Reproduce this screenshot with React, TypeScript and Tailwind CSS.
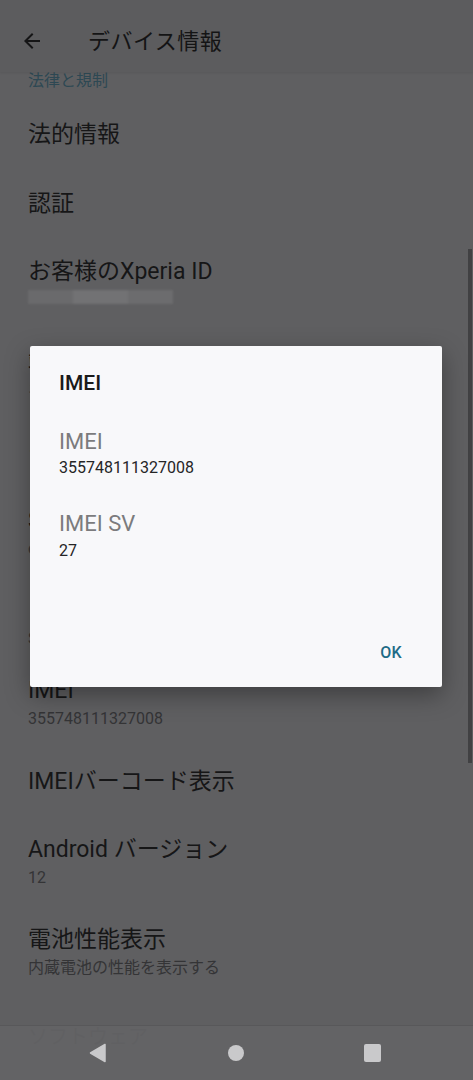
import React from "react";

const font = "font-['Roboto','Noto_Sans_CJK_JP',sans-serif]";

type Item = { title: string; sub?: string; h: string };

const items: Item[] = [
  { title: "法的情報", h: "h-[69px]" },
  { title: "認証", h: "h-[69px]" },
  { title: "お客様のXperia ID", sub: "blur", h: "h-[90px]" },
  { title: "端末の状態", sub: "ネットワーク、バッテリー", h: "h-[90px]" },
  { title: "ー", h: "h-[69px]" },
  { title: "SIM ステータス", sub: "docomo", h: "h-[90px]" },
  { title: "モデル", sub: "SO-52B", h: "h-[80px]" },
  { title: "IMEI", sub: "355748111327008", h: "h-[90px]" },
  { title: "IMEIバーコード表示", h: "h-[69px]" },
  { title: "Android バージョン", sub: "12", h: "h-[90px]" },
  { title: "電池性能表示", sub: "内蔵電池の性能を表示する", h: "h-[90px]" },
];

function Row({ item }: { item: Item }) {
  return (
    <div className={`${item.h} shrink-0 px-7 flex flex-col ${item.sub ? "pt-[20px]" : "justify-center"}`}>
      <div className="text-[23px] leading-[28px] text-[#161617]">{item.title}</div>
      {item.sub === "blur" ? (
        <div className="mt-[4px] h-[14px] w-[145px] flex blur-[1px]">
          <div className="w-[45px] bg-[#6a6a6c]" />
          <div className="w-[55px] bg-[#727274]" />
          <div className="w-[45px] bg-[#6c6c6e]" />
        </div>
      ) : item.sub ? (
        <div className="mt-[4px] text-[16px] leading-[20px] text-[#343436]">{item.sub}</div>
      ) : null}
    </div>
  );
}

export default function App() {
  return (
    <div className={`relative w-[473px] h-[1080px] overflow-hidden bg-[#5f5f61] ${font}`}>
      <div className="flex flex-col h-full">
        <div className="h-[72px] shrink-0 flex items-center pt-[10px] bg-[#5c5c5e] shadow-[0_1px_2px_rgba(0,0,0,0.08)] relative z-10">
          <svg width="24" height="24" viewBox="0 0 24 24" className="ml-[20px]" fill="#151516">
            <path d="M20 11H7.83l5.59-5.59L12 4l-8 8 8 8 1.41-1.41L7.83 13H20v-2z" />
          </svg>
          <div className="ml-[44px] text-[22px] text-[#141415] tracking-[0.5px]">デバイス情報</div>
        </div>
        <div className="flex-1 overflow-hidden flex flex-col">
          <div className="h-[28px] shrink-0 px-7 text-[16px] leading-[18px] text-[#2d4853]">法律と規制</div>
          {items.map((it, i) => (
            <Row key={i} item={it} />
          ))}
          <div className="shrink-0 px-7 pt-[29px] text-[20px] leading-[24px] text-[#161617]">ソフトウェア</div>
        </div>
      </div>

      {/* scrollbar */}
      <div className="absolute left-[468px] top-[249px] w-[4px] h-[514px] bg-[#414143]" />

      {/* dialog */}
      <div className="absolute left-[30px] top-[346px] w-[412px] h-[341px] bg-[#f8f8fa] rounded-[2px] shadow-[0_8px_24px_rgba(0,0,0,0.35)] flex flex-col">
        <div className="pl-[29px] pt-[24px] text-[21px] leading-[26px] font-medium text-[#1a1a1a]">IMEI</div>
        <div className="pl-[29px] pt-[33px] flex flex-col">
          <div className="text-[22px] leading-[26px] text-[#7b7b7d]">IMEI</div>
          <div className="text-[16px] leading-[26px] text-[#252526]">355748111327008</div>
          <div className="mt-[30px] text-[22px] leading-[26px] text-[#7b7b7d]">IMEI SV</div>
          <div className="mt-[1px] text-[16px] leading-[26px] text-[#252526]">27</div>
        </div>
        <div className="mt-auto flex justify-end pr-[40px] pb-[22px]">
          <div className="text-[16px] font-medium text-[#1f6b86] tracking-[0.3px]">OK</div>
        </div>
      </div>

      {/* nav bar */}
      <div className="absolute left-0 right-0 bottom-0 h-[55px] bg-[#636365]/[0.97] border-t border-[#58585a] flex items-center">
        <svg width="20" height="20" viewBox="0 0 20 20" className="ml-[88px]">
          <path d="M17 1.5 L17 18.5 L2.5 10 Z" fill="#c9c9cb" strokeLinejoin="round" stroke="#c9c9cb" strokeWidth="1.5" />
        </svg>
        <div className="ml-[120px] w-[16px] h-[16px] rounded-full bg-[#c9c9cb]" />
        <div className="ml-[120px] w-[17px] h-[18px] rounded-[2px] bg-[#c9c9cb]" />
      </div>
    </div>
  );
}
